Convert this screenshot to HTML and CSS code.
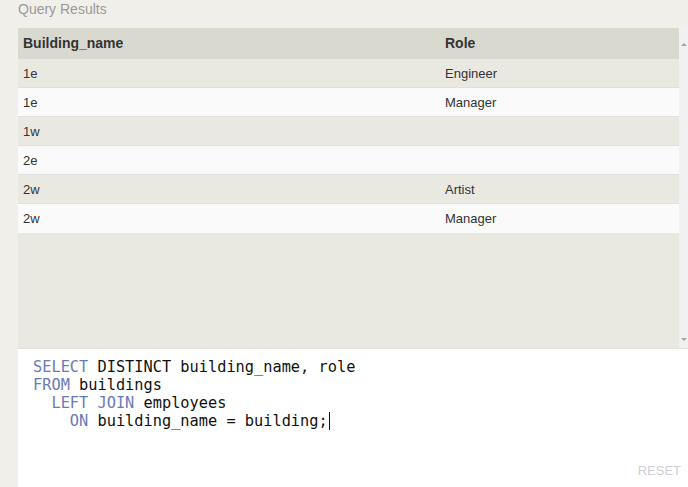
FILE: index.html
```html
<!DOCTYPE html>
<html>
<head>
<meta charset="utf-8">
<link rel="stylesheet" href="styles.css">
</head>
<body>
<div class="app">
  <div class="title">Query Results</div>
  <div class="results">
    <div class="table-wrap">
      <table class="grid">
        <thead>
          <tr><th class="c1">Building_name</th><th>Role</th></tr>
        </thead>
        <tbody>
          <tr class="odd"><td>1e</td><td>Engineer</td></tr>
          <tr class="even"><td>1e</td><td>Manager</td></tr>
          <tr class="odd"><td>1w</td><td></td></tr>
          <tr class="even"><td>2e</td><td></td></tr>
          <tr class="odd"><td>2w</td><td>Artist</td></tr>
          <tr class="even"><td>2w</td><td>Manager</td></tr>
        </tbody>
      </table>
    </div>
    <div class="scrollbar">
      <span class="arrow up"></span>
      <span class="arrow down"></span>
    </div>
  </div>
  <div class="editor">
<pre class="code"><span class="kw">SELECT</span> DISTINCT building_name, role
<span class="kw">FROM</span> buildings
  <span class="kw">LEFT JOIN</span> employees
    <span class="kw">ON</span> building_name = building;<span class="caret"></span></pre>
    <div class="reset">RESET</div>
  </div>
</div>
</body>
</html>
```

FILE: styles.css
```css
html, body {
  margin: 0;
  padding: 0;
  background: #f1efe9;
  height: 100%;
  overflow: hidden;
}
.app {
  padding-left: 18px;
  display: flex;
  flex-direction: column;
  height: 487px;
  font-family: "Liberation Sans", Arial, sans-serif;
}
.title {
  height: 28px;
  box-sizing: border-box;
  padding-top: 1px;
  font-size: 14px;
  line-height: 17px;
  color: #9a9a9a;
}
.results {
  height: 321px;
  display: flex;
  background: #eae9e1;
  border-bottom: 1px solid #e2e1da;
  box-sizing: border-box;
}
.table-wrap {
  flex: 1;
}
.grid {
  width: 100%;
  border-collapse: collapse;
  font-size: 13px;
  color: #333;
}
.grid th {
  text-align: left;
  font-weight: bold;
  font-size: 14px;
  height: 30px;
  padding: 0 0 0 5px;
  background: #d9d9cf;
  color: #333;
}
.grid th.c1 {
  width: 417px;
}
.grid td {
  height: 28px;
  padding: 0 0 0 5px;
  border-top: 1px solid #dfdfdb;
}
.grid tbody tr:first-child td {
  border-top: 1px solid #d9d9cf;
}
.grid tr.odd td {
  background: #eae9e1;
}
.grid tr.even td {
  background: #fafafa;
}
.grid tbody tr:last-child td {
  height: 29px;
}
.scrollbar {
  width: 9px;
  background: #f1f1f1;
  display: flex;
  flex-direction: column;
  justify-content: space-between;
  align-items: center;
  padding: 15px 0 7px;
  box-sizing: border-box;
}
.arrow {
  width: 0;
  height: 0;
  border-left: 3px solid transparent;
  border-right: 3px solid transparent;
}
.arrow.up {
  border-bottom: 3px solid #a3a3a3;
}
.arrow.down {
  border-top: 3px solid #a3a3a3;
}
.editor {
  flex: 1;
  background: #ffffff;
  position: relative;
}
.code {
  margin: 0;
  padding: 9px 0 0 15px;
  font-family: "DejaVu Sans Mono", monospace;
  font-size: 15.3px;
  line-height: 18px;
  color: #111;
}
.kw {
  color: #6a7ab8;
}
.caret {
  display: inline-block;
  width: 1px;
  height: 18px;
  background: #111;
  vertical-align: -4px;
  margin-left: 1px;
}
.reset {
  position: absolute;
  right: 7px;
  bottom: 9px;
  font-size: 13px;
  color: #cfcfd4;
}
```
